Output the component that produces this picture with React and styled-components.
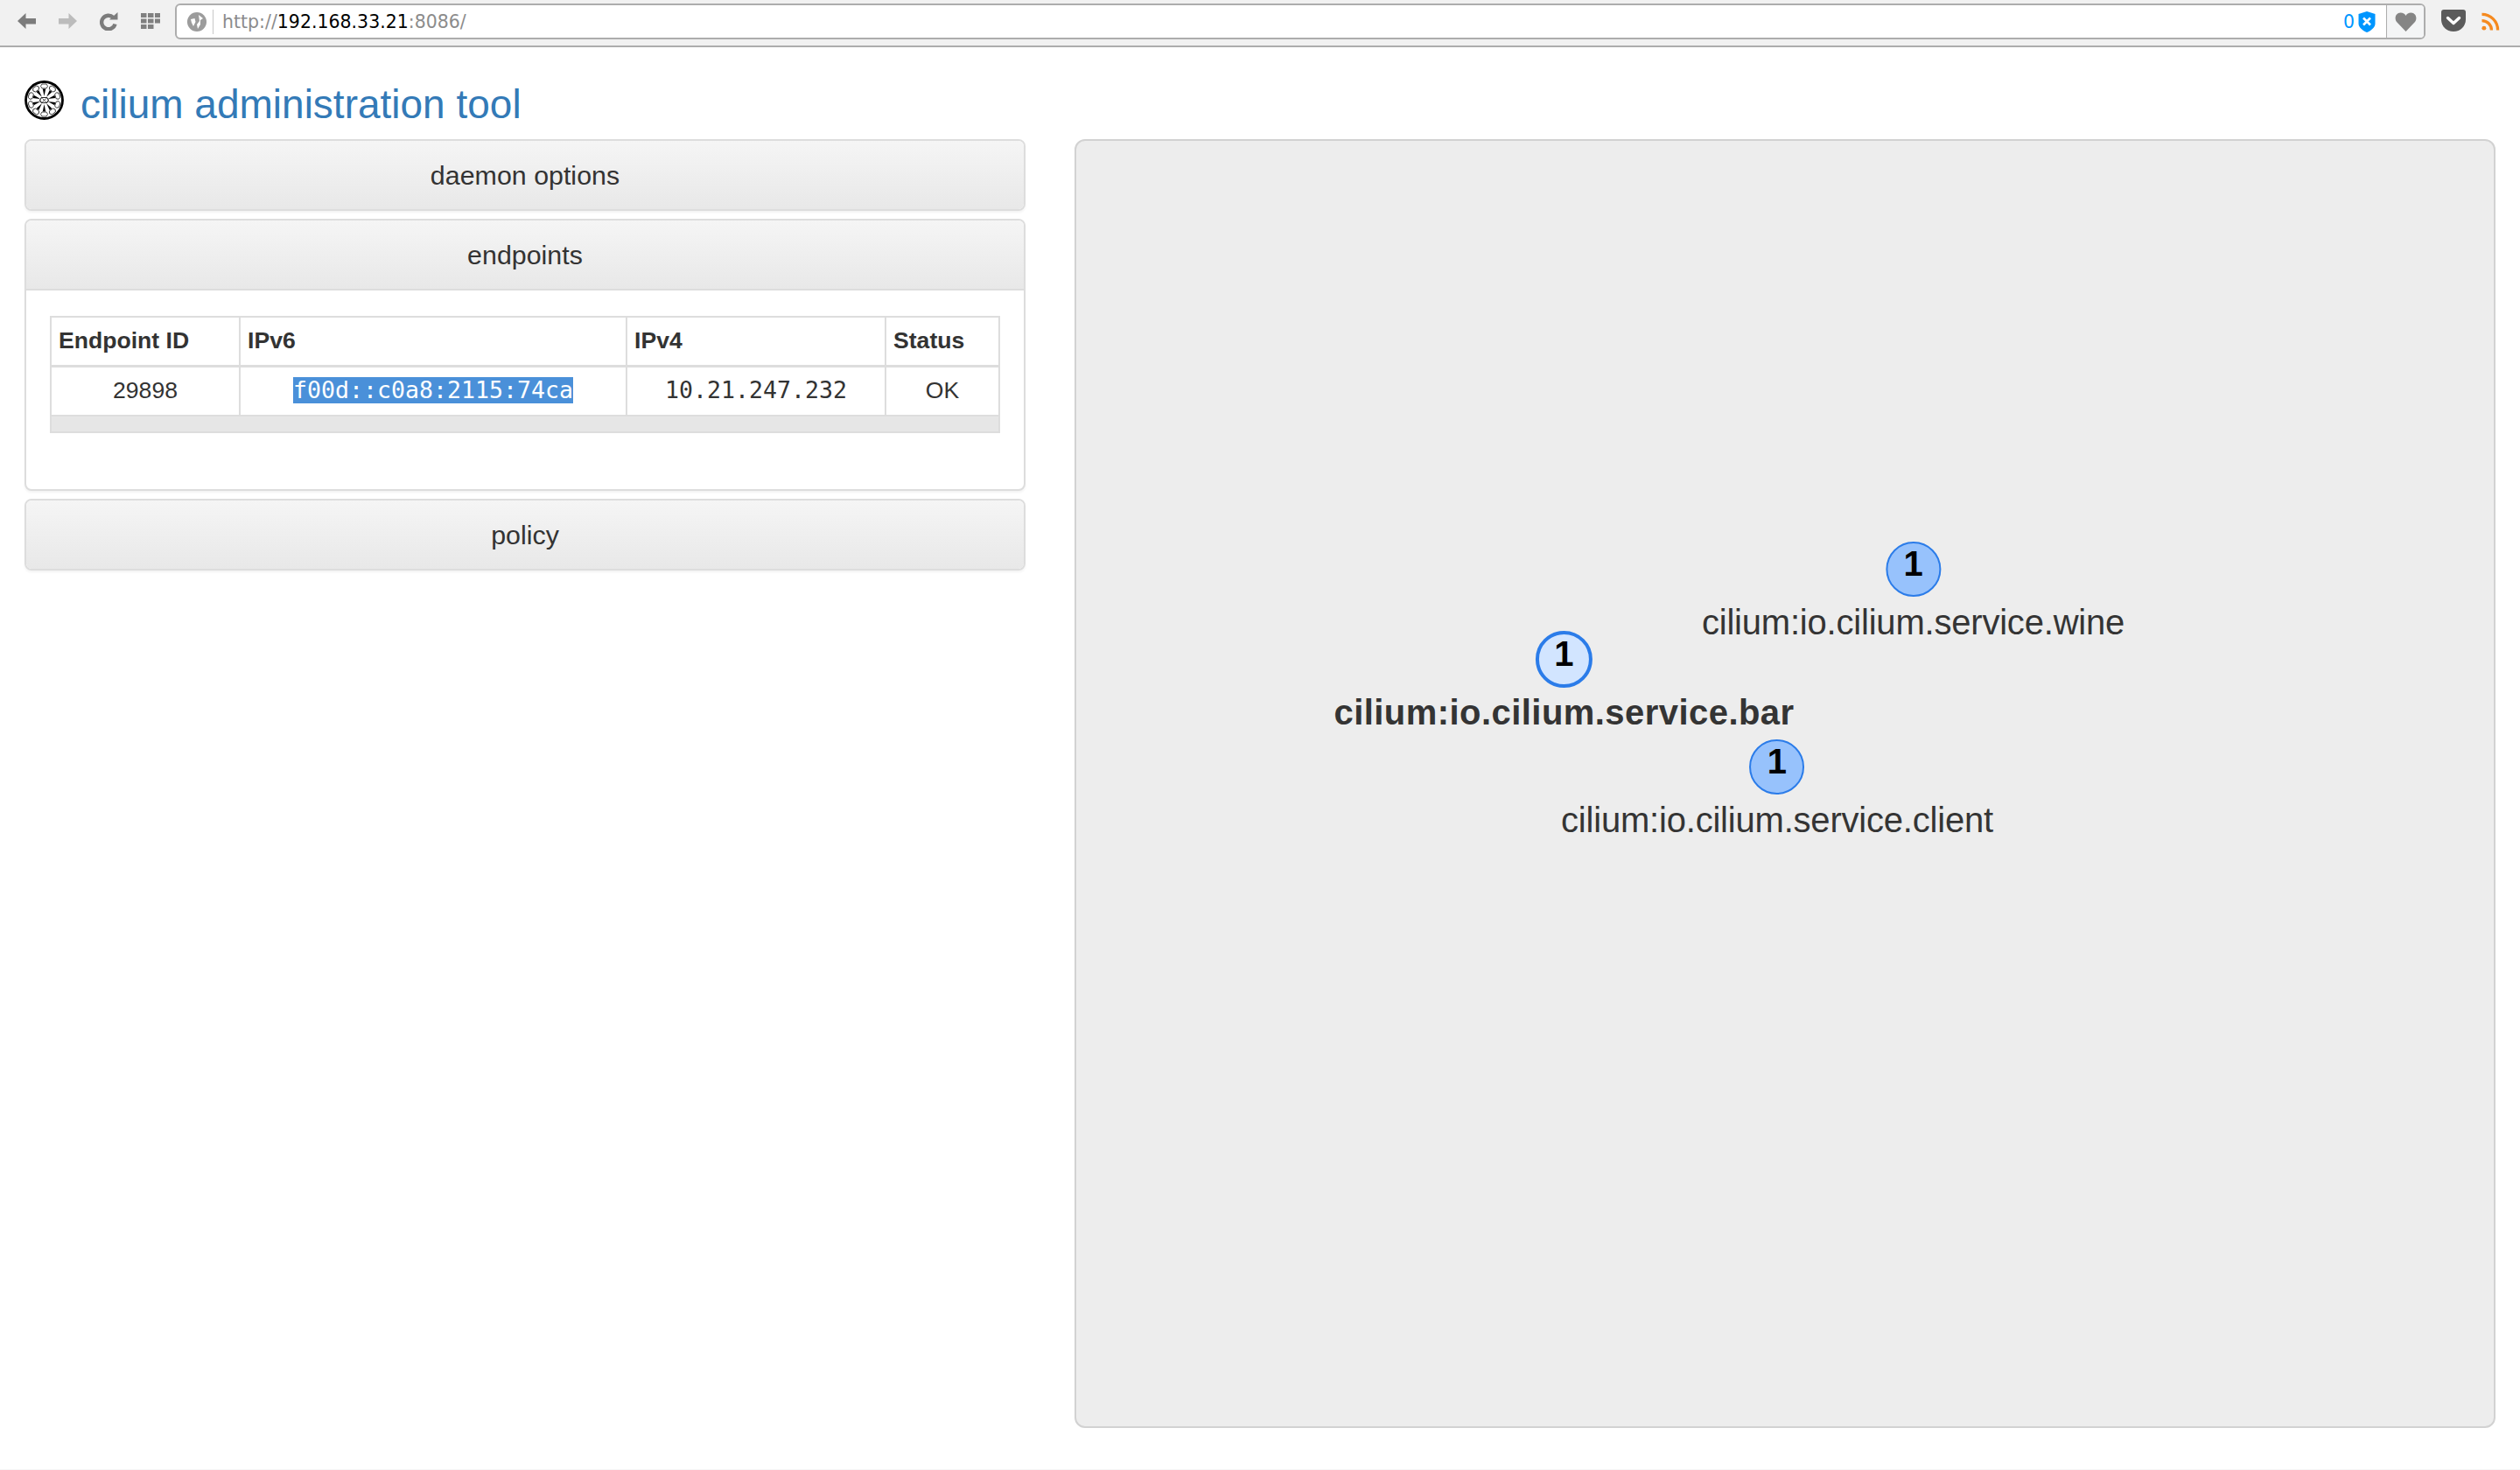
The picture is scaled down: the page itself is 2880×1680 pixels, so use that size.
import React from "react";
import styled, { createGlobalStyle } from "styled-components";

const GlobalStyle = createGlobalStyle`
  html, body {
    margin: 0;
    padding: 0;
    background: #fff;
    font-family: "Liberation Sans", Arial, sans-serif;
    color: #333;
  }
  * {
    box-sizing: border-box;
  }
`;

const Page = styled.div`
  width: 2880px;
  height: 1680px;
  overflow: hidden;
  border-bottom: 1px solid #f6f6f6;
`;

const Toolbar = styled.div`
  height: 54px;
  background: #f1f1f1;
  border-bottom: 2px solid #adadad;
  display: flex;
  align-items: flex-start;
  padding: 4px 0 0 20px;
`;

const NavIcons = styled.div`
  display: flex;
  align-items: center;
  width: 180px;
  height: 40px;
  gap: 26px;
`;

const UrlBar = styled.div`
  width: 2572px;
  height: 41px;
  background: #fff;
  border: 2px solid #adadad;
  border-radius: 6px;
  display: flex;
  align-items: center;
  overflow: hidden;
`;

const SiteInfo = styled.div`
  width: 42px;
  height: 28px;
  flex: none;
  border-right: 1px solid #c8c8c8;
  display: flex;
  align-items: center;
  padding-left: 12px;
`;

const Url = styled.div`
  margin-left: 10px;
  font-family: "DejaVu Sans", sans-serif;
  font-size: 20.5px;
  color: #8c8c8c;
  white-space: nowrap;
  flex: 1;

  b {
    font-weight: normal;
    color: #000;
  }
`;

const BlockCount = styled.div`
  font-family: "DejaVu Sans", sans-serif;
  font-size: 20.4px;
  color: #0096ff;
  margin-right: 4px;
`;

const HeartBox = styled.div`
  width: 43px;
  height: 100%;
  margin-left: 12px;
  background: #f4f5f6;
  border-left: 1px solid #adadad;
  display: flex;
  align-items: center;
  justify-content: center;
`;

const ExtIcons = styled.div`
  display: flex;
  align-items: center;
  height: 40px;
  margin-left: 18px;
  gap: 18px;
`;

const Content = styled.div`
  padding: 0 28px;
`;

const Heading = styled.div`
  height: 105px;
  display: flex;
  align-items: flex-start;
  padding-top: 38px;
`;

const Title = styled.h1`
  margin: 0 0 0 19px;
  font-size: 46px;
  line-height: 54px;
  font-weight: normal;
  color: #337ab7;
`;

const Columns = styled.div`
  display: grid;
  grid-template-columns: 1144px 1624px;
  column-gap: 56px;
`;

const Accordion = styled.div`
  display: flex;
  flex-direction: column;
  gap: 9px;
`;

const Panel = styled.section`
  border: 2px solid #ddd;
  border-radius: 8px;
  background: #fff;
  overflow: hidden;
  box-shadow: 0 2px 3px rgba(0, 0, 0, 0.05);
`;

const PanelHeader = styled.div`
  height: 78px;
  background: linear-gradient(to bottom, #f5f5f5, #e8e8e8);
  display: flex;
  align-items: center;
  justify-content: center;
  font-size: 30.4px;
  color: #333;
`;

const PanelBody = styled.div`
  border-top: 2px solid #ddd;
  padding: 29px 27px 64px;
`;

const Table = styled.table`
  width: 1086px;
  table-layout: fixed;
  border-collapse: collapse;
  font-size: 26.6px;
  color: #333;
  border: 2px solid #ddd;

  th {
    height: 56px;
    text-align: left;
    padding: 0 8px;
    border: 2px solid #ddd;
    border-bottom-width: 3px;
    font-weight: bold;
  }

  td {
    height: 57px;
    text-align: center;
    padding: 0;
    border: 2px solid #ddd;
  }

  tfoot td {
    height: 19px;
    background: #e6e6e6;
  }
`;

const Mono = styled.span`
  font-family: "DejaVu Sans Mono", monospace;
  font-size: 26.6px;
  line-height: 30px;
  display: inline-block;
`;

const Selected = styled(Mono)`
  background: #4a90d9;
  color: #fff;
`;

const Graph = styled.div`
  position: relative;
  height: 1473px;
  background: #ededed;
  border: 2px solid #d2d2d2;
  border-radius: 12px;
`;

const Node = styled.div`
  position: absolute;
  left: ${(p) => p.$x}px;
  top: ${(p) => p.$y}px;
  transform: translateX(-50%);
  display: flex;
  flex-direction: column;
  align-items: center;
`;

const Bubble = styled.div`
  width: ${(p) => (p.$selected ? 65 : 63)}px;
  height: ${(p) => (p.$selected ? 65 : 63)}px;
  border-radius: 50%;
  background: ${(p) => (p.$selected ? "#d2e5ff" : "#97c2fc")};
  border: ${(p) => (p.$selected ? 4 : 2)}px solid #2b7ce9;
  display: flex;
  align-items: center;
  justify-content: center;
  font-size: 40px;
  font-weight: bold;
  color: #000;
  padding-bottom: 12px;
`;

const NodeLabel = styled.div`
  margin-top: ${(p) => (p.$selected ? 5 : 6)}px;
  font-size: 40px;
  line-height: 46px;
  white-space: nowrap;
  color: #343434;
  font-weight: ${(p) => (p.$selected ? "bold" : "normal")};
  letter-spacing: ${(p) => (p.$selected ? 0.45 : -0.2)}px;
`;

function IconBack({ color }) {
  return (
    <svg width="21" height="18" viewBox="0 0 21 18">
      <path d="M9.5 0 L0 9 L9.5 18 V12.5 H21 V6 H9.5 Z" fill={color} />
    </svg>
  );
}

function IconForward({ color }) {
  return (
    <svg width="21" height="18" viewBox="0 0 21 18">
      <path d="M11.5 0 L21 9 L11.5 18 V12.5 H0 V6 H11.5 Z" fill={color} />
    </svg>
  );
}

function IconReload() {
  return (
    <svg width="21" height="21" viewBox="0 0 21 21">
      <path d="M15.5 6 A7.8 7.8 0 1 0 17.5 13.5" fill="none" stroke="#7c7c7c" strokeWidth="4.4" />
      <path d="M11 8.5 L20.5 8.5 L20.5 0 Z" fill="#7c7c7c" />
    </svg>
  );
}

function IconApps() {
  const cells = [];
  [0, 6.5, 13].forEach((y) => {
    [0, 8, 16].forEach((x) => {
      if (y === 13 && x === 16) return;
      cells.push(<rect key={`${x}-${y}`} x={x} y={y} width="6.5" height="5" fill="#808080" />);
    });
  });
  return (
    <svg width="22" height="18" viewBox="0 0 22 18">
      {cells}
    </svg>
  );
}

function IconGlobe() {
  return (
    <svg width="22" height="22" viewBox="0 0 22 22">
      <circle cx="11" cy="11" r="11" fill="#9c9c9c" />
      <path d="M4 8 L8.5 7 L9.5 11 L7 16 L5 12 Z M13 3 L18 7 L15 9 L15 14 L12 19 L11 14 L14 10 Z" fill="#fff" />
    </svg>
  );
}

function IconShield() {
  return (
    <svg width="20" height="24" viewBox="0 0 20 24">
      <path d="M10 0 L19.5 3 V14 C19.5 18 15 22 10 24 C5 22 .5 18 .5 14 V3 Z" fill="#0096ff" />
      <path d="M6 7.5 L14 15.5 M14 7.5 L6 15.5" stroke="#fff" strokeWidth="2.6" />
    </svg>
  );
}

function IconHeart() {
  return (
    <svg width="25" height="22" viewBox="0 0 25 22">
      <path d="M12.5 22 L2 11 C-1 7 1 0.5 6.5 0.5 C9.5 0.5 11.5 2 12.5 4 C13.5 2 15.5 0.5 18.5 0.5 C24 0.5 26 7 23 11 Z" fill="#858585" />
    </svg>
  );
}

function IconPocket() {
  return (
    <svg width="28" height="26" viewBox="0 0 28 26">
      <path d="M0 3 Q0 0 3 0 H25 Q28 0 28 3 V11 C28 19 22 25 14 25 C6 25 0 19 0 11 Z" fill="#5b5b5b" />
      <path d="M7.5 9.5 L14 15.5 L20.5 9.5" fill="none" stroke="#fff" strokeWidth="3.4" strokeLinecap="round" strokeLinejoin="round" />
    </svg>
  );
}

function IconRss() {
  return (
    <svg width="21" height="21" viewBox="0 0 22 22">
      <circle cx="3" cy="19" r="2.6" fill="#f58a1f" />
      <path d="M0.5 10 A11.5 11.5 0 0 1 12 21.5 M0.5 2.5 A19 19 0 0 1 19.5 21.5" fill="none" stroke="#f58a1f" strokeWidth="3.4" />
    </svg>
  );
}

function Logo() {
  const angles = [0, 36, 72, 108, 144, 180, 216, 252, 288, 324];
  return (
    <svg width="45" height="45" viewBox="0 0 45 45">
      <circle cx="22.5" cy="22.5" r="21" fill="#fff" stroke="#000" strokeWidth="2.8" />
      {angles.map((a) => (
        <g key={a} transform={`rotate(${a} 22.5 22.5)`}>
          <path d="M22.5 18 L20.8 9.5 H24.2 Z" fill="#000" />
          <path d="M20 4 H25 L26.5 6.5 L25 9 H20 L18.5 6.5 Z" fill="#fff" stroke="#333" strokeWidth=".9" />
        </g>
      ))}
      <path d="M19.5 19.5 H25.5 L27.5 22.5 L25.5 25.5 H19.5 L17.5 22.5 Z" fill="#fff" stroke="#222" strokeWidth="1.2" />
      <path d="M20.5 20.5 L24.5 24.5 M24.5 20.5 L20.5 24.5" stroke="#333" strokeWidth="1" />
    </svg>
  );
}

const nodes = [
  { id: "wine", x: 956.5, y: 458, label: "cilium:io.cilium.service.wine" },
  { id: "bar", x: 557.5, y: 560, label: "cilium:io.cilium.service.bar", selected: true },
  { id: "client", x: 801, y: 684, label: "cilium:io.cilium.service.client" },
];

export default function App() {
  return (
    <Page>
      <GlobalStyle />
      <Toolbar>
        <NavIcons>
          <IconBack color="#7c7c7c" />
          <IconForward color="#bcbcbc" />
          <IconReload />
          <IconApps />
        </NavIcons>
        <UrlBar>
          <SiteInfo>
            <IconGlobe />
          </SiteInfo>
          <Url>
            http://<b>192.168.33.21</b>:8086/
          </Url>
          <BlockCount>0</BlockCount>
          <IconShield />
          <HeartBox>
            <IconHeart />
          </HeartBox>
        </UrlBar>
        <ExtIcons>
          <IconPocket />
          <IconRss />
        </ExtIcons>
      </Toolbar>
      <Content>
        <Heading>
          <Logo />
          <Title>cilium administration tool</Title>
        </Heading>
        <Columns>
          <Accordion>
            <Panel>
              <PanelHeader>daemon options</PanelHeader>
            </Panel>
            <Panel>
              <PanelHeader>endpoints</PanelHeader>
              <PanelBody>
                <Table>
                  <colgroup>
                    <col style={{ width: 216 }} />
                    <col style={{ width: 442 }} />
                    <col style={{ width: 296 }} />
                    <col style={{ width: 130 }} />
                  </colgroup>
                  <thead>
                    <tr>
                      <th>Endpoint ID</th>
                      <th>IPv6</th>
                      <th>IPv4</th>
                      <th>Status</th>
                    </tr>
                  </thead>
                  <tbody>
                    <tr>
                      <td>29898</td>
                      <td>
                        <Selected>f00d::c0a8:2115:74ca</Selected>
                      </td>
                      <td>
                        <Mono>10.21.247.232</Mono>
                      </td>
                      <td>OK</td>
                    </tr>
                  </tbody>
                  <tfoot>
                    <tr>
                      <td colSpan="4" />
                    </tr>
                  </tfoot>
                </Table>
              </PanelBody>
            </Panel>
            <Panel>
              <PanelHeader>policy</PanelHeader>
            </Panel>
          </Accordion>
          <Graph>
            {nodes.map((n) => (
              <Node key={n.id} $x={n.x} $y={n.y}>
                <Bubble $selected={n.selected}>1</Bubble>
                <NodeLabel $selected={n.selected}>{n.label}</NodeLabel>
              </Node>
            ))}
          </Graph>
        </Columns>
      </Content>
    </Page>
  );
}
